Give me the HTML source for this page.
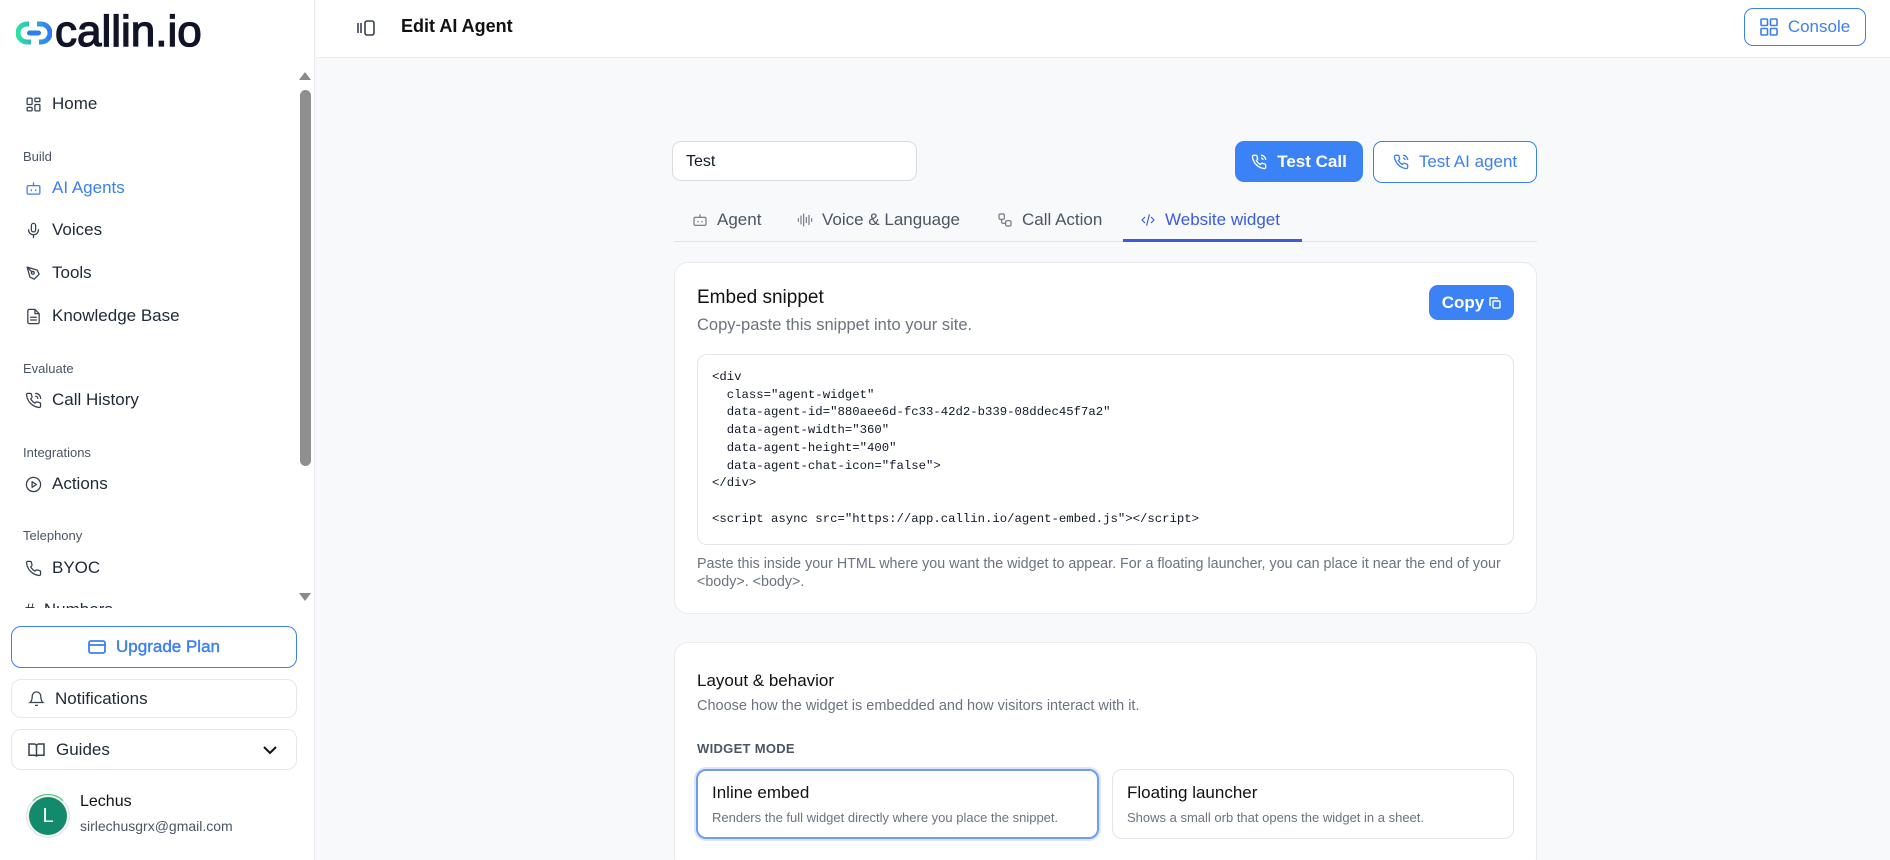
<!DOCTYPE html>
<html style="width:1890px;height:860px;overflow:hidden"><head><meta charset="utf-8"><style>
*{box-sizing:border-box;margin:0;padding:0}
body{width:1890px;height:860px;overflow:hidden;font-family:"Liberation Sans",sans-serif;background:#f8f9fb;color:#111827;position:relative}
.abs{position:absolute}
.side{position:absolute;left:0;top:0;width:315px;height:860px;background:#fff;border-right:1px solid #e8e9ee}
.nav{position:absolute;left:25px;font-size:17px;color:#1f2937;display:flex;align-items:center;gap:10px;line-height:20px}
.nav svg{width:17px;height:17px;fill:none;stroke:#374151;stroke-width:1.8;stroke-linecap:round;stroke-linejoin:round}
.sec{position:absolute;left:23px;font-size:13px;color:#4b5563}
.btn{position:absolute;left:11px;width:286px;border:1px solid #e5e7eb;border-radius:10px;background:#fff;display:flex;align-items:center;font-size:17px;color:#1f2937}
.header{position:absolute;left:316px;top:0;right:0;height:58px;border-bottom:1px solid #eceef2;background:#fff}
.card{position:absolute;left:674px;width:863px;background:#fff;border:1px solid #e8eaee;border-radius:14px}
.code{font-family:"Liberation Mono",monospace;font-size:12.3px;line-height:17.7px;white-space:pre;color:#111827}
.tab{position:absolute;top:210px;font-size:17px;color:#4b5563;display:flex;align-items:center;gap:9px}
.tab svg{width:16px;height:16px;fill:none;stroke:#6b7280;stroke-width:1.7;stroke-linecap:round;stroke-linejoin:round}
</style></head><body>
<div class="side">
  <svg class="abs" style="left:16px;top:20px" width="36" height="26" viewBox="0 0 36 26"><defs><linearGradient id="g" x1="0" x2="1"><stop offset="0" stop-color="#2fe0a0"/><stop offset="1" stop-color="#2f7cf6"/></linearGradient></defs><path d="M13 4H11a9 9 0 0 0 0 18h4M21 4h4a9 9 0 0 1 0 18h-2" fill="none" stroke="url(#g)" stroke-width="5"/><rect x="11" y="10.5" width="14" height="5" rx="2.5" fill="#2f7cf6"/></svg>
  <div class="abs" style="left:55px;top:7px;font-size:44px;color:#111428;-webkit-text-stroke:1.3px #111428;letter-spacing:0">callin.io</div>
  <div class="abs" style="left:299px;top:72px;width:0;height:0;border-left:6px solid transparent;border-right:6px solid transparent;border-bottom:8px solid #8a8a8a"></div>
  <div class="abs" style="left:300px;top:90px;width:11px;height:376px;background:#8f8f8f;border-radius:6px"></div>
  <div class="abs" style="left:299px;top:593px;width:0;height:0;border-left:6px solid transparent;border-right:6px solid transparent;border-top:8px solid #8a8a8a"></div>
  <div class="nav" style="top:94px"><svg viewBox="0 0 24 24"><rect x="3" y="3" width="7" height="9" rx="1"/><rect x="14" y="3" width="7" height="5" rx="1"/><rect x="14" y="12" width="7" height="9" rx="1"/><rect x="3" y="16" width="7" height="5" rx="1"/></svg>Home</div>
  <div class="sec" style="top:149px">Build</div>
  <div class="nav" style="top:178px;color:#3b7ff0"><svg viewBox="0 0 24 24" style="stroke:#3b7ff0"><rect x="3" y="8" width="18" height="12" rx="2"/><path d="M12 8V4M9 14v1M15 14v1"/></svg>AI Agents</div>
  <div class="nav" style="top:220px"><svg viewBox="0 0 24 24"><rect x="9" y="2" width="6" height="12" rx="3"/><path d="M5 11a7 7 0 0 0 14 0M12 18v4"/></svg>Voices</div>
  <div class="nav" style="top:263px"><svg viewBox="0 0 24 24"><path d="M3 3l14 4 3 6-7 7-6-3z M3 3l7 7"/><circle cx="11" cy="11" r="2"/></svg>Tools</div>
  <div class="nav" style="top:306px"><svg viewBox="0 0 24 24"><path d="M14 2H6a2 2 0 0 0-2 2v16a2 2 0 0 0 2 2h12a2 2 0 0 0 2-2V8z M14 2v6h6M8 13h8M8 17h8"/></svg>Knowledge Base</div>
  <div class="sec" style="top:361px">Evaluate</div>
  <div class="nav" style="top:390px"><svg viewBox="0 0 24 24"><path d="M22 16.9v3a2 2 0 0 1-2.2 2 19.8 19.8 0 0 1-8.6-3.1 19.5 19.5 0 0 1-6-6A19.8 19.8 0 0 1 2.1 4.2 2 2 0 0 1 4.1 2h3a2 2 0 0 1 2 1.7l.7 2.8a2 2 0 0 1-.5 2.1L8 9.8a16 16 0 0 0 6 6l1.3-1.3a2 2 0 0 1 2.1-.4l2.8.7a2 2 0 0 1 1.7 2zM15 2a7 7 0 0 1 7 7M15 6a3 3 0 0 1 3 3"/></svg>Call History</div>
  <div class="sec" style="top:445px">Integrations</div>
  <div class="nav" style="top:474px"><svg viewBox="0 0 24 24"><circle cx="12" cy="12" r="10"/><path d="M10 8l6 4-6 4z"/></svg>Actions</div>
  <div class="sec" style="top:528px">Telephony</div>
  <div class="nav" style="top:558px"><svg viewBox="0 0 24 24"><path d="M22 16.9v3a2 2 0 0 1-2.2 2 19.8 19.8 0 0 1-8.6-3.1 19.5 19.5 0 0 1-6-6A19.8 19.8 0 0 1 2.1 4.2 2 2 0 0 1 4.1 2h3a2 2 0 0 1 2 1.7l.7 2.8a2 2 0 0 1-.5 2.1L8 9.8a16 16 0 0 0 6 6l1.3-1.3a2 2 0 0 1 2.1-.4l2.8.7a2 2 0 0 1 1.7 2z"/></svg>BYOC</div>
  <div class="abs" style="left:0;top:600px;width:296px;height:8px;overflow:hidden"><div class="nav" style="top:0;left:25px">#&nbsp;&nbsp;Numbers</div></div>
  <div class="btn" style="top:626px;height:42px;border-color:#3b7ff0;justify-content:center;color:#3b7ff0;gap:10px"><svg width="18" height="14" viewBox="0 0 18 14" fill="none" stroke="#3b7ff0" stroke-width="1.8"><rect x="1" y="1" width="16" height="12" rx="2"/><path d="M1 5h16"/></svg><span style="color:#3b7ff0;-webkit-text-stroke:0.4px #3b7ff0">Upgrade Plan</span></div>
  <div class="btn" style="top:679px;height:39px;padding-left:16px;gap:10px"><svg width="17" height="18" viewBox="0 0 24 24" fill="none" stroke="#374151" stroke-width="1.8"><path d="M6 8a6 6 0 0 1 12 0c0 7 3 9 3 9H3s3-2 3-9M10 21h4"/></svg>Notifications</div>
  <div class="btn" style="top:729px;height:41px;padding-left:15px;gap:10px"><svg width="19" height="18" viewBox="0 0 24 24" fill="none" stroke="#374151" stroke-width="2"><path d="M2 4h7a3 3 0 0 1 3 3v14a2 2 0 0 0-2-2H2zM22 4h-7a3 3 0 0 0-3 3v14a2 2 0 0 1 2-2h8z"/></svg>Guides<svg style="position:absolute;right:18px" width="16" height="10" viewBox="0 0 16 10" fill="none" stroke="#111" stroke-width="2"><path d="M2 2l6 6 6-6"/></svg></div>
  <div class="abs" style="left:26px;top:794px;width:44px;height:44px;border-radius:50%;background:#f2f2f2;border:1px solid #e5e5e5;border-top-color:#3fbf6f"></div>
  <div class="abs" style="left:29px;top:797px;width:38px;height:38px;border-radius:50%;background:#138a6c;color:#fff;font-size:20px;display:flex;align-items:center;justify-content:center">L</div>
  <div class="abs" style="left:80px;top:793px;font-size:16px;color:#111">Lechus</div>
  <div class="abs" style="left:80px;top:818px;font-size:14px;color:#4b5563">sirlechusgrx@gmail.com</div>
</div>
<div class="header">
  <svg class="abs" style="left:40px;top:19px" width="20" height="18" viewBox="0 0 20 18" fill="none" stroke="#374151" stroke-width="1.6"><rect x="9" y="2" width="9" height="14" rx="2"/><path d="M2 4v10M5 4v10"/></svg>
  <div class="abs" style="left:85px;top:16px;font-size:18px;font-weight:bold;color:#111">Edit AI Agent</div>
  <div class="abs" style="left:1428px;top:8px;width:122px;height:38px;border:1px solid #3b7ff0;border-radius:9px;display:flex;align-items:center;justify-content:center;gap:10px;color:#3b7ff0;font-size:17px"><svg width="18" height="18" viewBox="0 0 18 18" fill="none" stroke="#3b7ff0" stroke-width="1.6"><rect x="1" y="1" width="6.5" height="6.5" rx="1"/><rect x="10.5" y="1" width="6.5" height="6.5" rx="1"/><rect x="1" y="10.5" width="6.5" height="6.5" rx="1"/><rect x="10.5" y="10.5" width="6.5" height="6.5" rx="1"/></svg>Console</div>
</div>
<div class="abs" style="left:672px;top:141px;width:245px;height:40px;background:#fff;border:1px solid #d8dbe0;border-radius:9px;padding:11px 13px;font-size:16px">Test</div>
<div class="abs" style="left:1235px;top:141px;width:128px;height:41px;background:#3b82f6;border-radius:9px;color:#fff;font-size:17px;font-weight:bold;display:flex;align-items:center;justify-content:center;gap:10px"><svg width="16" height="16" viewBox="0 0 24 24" fill="none" stroke="#fff" stroke-width="2"><path d="M22 16.9v3a2 2 0 0 1-2.2 2 19.8 19.8 0 0 1-8.6-3.1 19.5 19.5 0 0 1-6-6A19.8 19.8 0 0 1 2.1 4.2 2 2 0 0 1 4.1 2h3a2 2 0 0 1 2 1.7l.7 2.8a2 2 0 0 1-.5 2.1L8 9.8a16 16 0 0 0 6 6l1.3-1.3a2 2 0 0 1 2.1-.4l2.8.7a2 2 0 0 1 1.7 2zM15 2a7 7 0 0 1 7 7M15 6a3 3 0 0 1 3 3"/></svg>Test Call</div>
<div class="abs" style="left:1373px;top:141px;width:164px;height:42px;background:#fff;border:1px solid #3b7ff0;border-radius:9px;color:#3b7ff0;font-size:17px;display:flex;align-items:center;justify-content:center;gap:10px"><svg width="16" height="16" viewBox="0 0 24 24" fill="none" stroke="#3b7ff0" stroke-width="2"><path d="M22 16.9v3a2 2 0 0 1-2.2 2 19.8 19.8 0 0 1-8.6-3.1 19.5 19.5 0 0 1-6-6A19.8 19.8 0 0 1 2.1 4.2 2 2 0 0 1 4.1 2h3a2 2 0 0 1 2 1.7l.7 2.8a2 2 0 0 1-.5 2.1L8 9.8a16 16 0 0 0 6 6l1.3-1.3a2 2 0 0 1 2.1-.4l2.8.7a2 2 0 0 1 1.7 2zM15 2a7 7 0 0 1 7 7M15 6a3 3 0 0 1 3 3"/></svg>Test AI agent</div>
<div class="tab" style="left:692px"><svg viewBox="0 0 24 24"><rect x="3" y="8" width="18" height="12" rx="2"/><path d="M12 8V4M9 14v1M15 14v1"/></svg>Agent</div>
<div class="tab" style="left:797px"><svg viewBox="0 0 24 24"><path d="M2 10v4M6 6v12M10 3v18M14 8v8M18 5v14M22 10v4"/></svg>Voice &amp; Language</div>
<div class="tab" style="left:997px"><svg viewBox="0 0 24 24"><rect x="3" y="3" width="8" height="8" rx="2"/><rect x="13" y="13" width="8" height="8" rx="2"/><path d="M7 11v4a2 2 0 0 0 2 2h4"/></svg>Call Action</div>
<div class="tab" style="left:1140px;color:#3b5bdb"><svg viewBox="0 0 24 24" style="stroke:#3b5bdb"><path d="M7 8l-4 4 4 4M17 8l4 4-4 4M14 4l-4 16"/></svg>Website widget</div>
<div class="abs" style="left:674px;top:241px;width:863px;height:1px;background:#e2e4e8"></div>
<div class="abs" style="left:1123px;top:239px;width:179px;height:3px;background:#3b5bdb"></div>
<div class="card" style="top:262px;height:352px">
  <div class="abs" style="left:22px;top:24px;font-size:19px;color:#111">Embed snippet</div>
  <div class="abs" style="left:22px;top:53px;font-size:16.5px;color:#6b7280">Copy-paste this snippet into your site.</div>
  <div class="abs" style="left:754px;top:22px;width:85px;height:35px;background:#3b82f6;border-radius:9px;color:#fff;font-size:17px;font-weight:bold;display:flex;align-items:center;justify-content:center;gap:5px">Copy<svg width="12" height="12" viewBox="0 0 12 12" fill="none" stroke="#fff" stroke-width="1.4"><rect x="4" y="4" width="7" height="7" rx="1"/><path d="M8 2V1H1v7h1"/></svg></div>
  <div class="abs" style="left:22px;top:91px;width:817px;height:191px;border:1px solid #e2e4e8;border-radius:10px;padding:14px 14px"><div class="code">&lt;div
  class="agent-widget"
  data-agent-id="880aee6d-fc33-42d2-b339-08ddec45f7a2"
  data-agent-width="360"
  data-agent-height="400"
  data-agent-chat-icon="false"&gt;
&lt;/div&gt;

&lt;script async src="https://app.callin.io/agent-embed.js"&gt;&lt;/script&gt;</div></div>
  <div class="abs" style="left:22px;top:292px;font-size:14.3px;line-height:18px;color:#6b7280;width:815px">Paste this inside your HTML where you want the widget to appear. For a floating launcher, you can place it near the end of your &lt;body&gt;. &lt;body&gt;.</div>
</div>
<div class="card" style="top:642px;height:230px">
  <div class="abs" style="left:22px;top:28px;font-size:17px;color:#111">Layout &amp; behavior</div>
  <div class="abs" style="left:22px;top:55px;font-size:14.5px;color:#6b7280">Choose how the widget is embedded and how visitors interact with it.</div>
  <div class="abs" style="left:22px;top:98px;font-size:13px;font-weight:bold;color:#4b5563;letter-spacing:0.3px">WIDGET MODE</div>
  <div class="abs" style="left:21px;top:126px;width:403px;height:70px;border:2px solid #6f9cf0;border-radius:10px;box-shadow:0 0 0 2px #dbe7fd"><div class="abs" style="left:14px;top:12px;font-size:17px;color:#111">Inline embed</div><div class="abs" style="left:14px;top:39px;font-size:13px;color:#6b7280">Renders the full widget directly where you place the snippet.</div></div>
  <div class="abs" style="left:437px;top:126px;width:402px;height:70px;border:1px solid #e2e4e8;border-radius:10px"><div class="abs" style="left:14px;top:13px;font-size:17px;color:#111">Floating launcher</div><div class="abs" style="left:14px;top:40px;font-size:13px;color:#6b7280">Shows a small orb that opens the widget in a sheet.</div></div>
</div>
</body></html>
